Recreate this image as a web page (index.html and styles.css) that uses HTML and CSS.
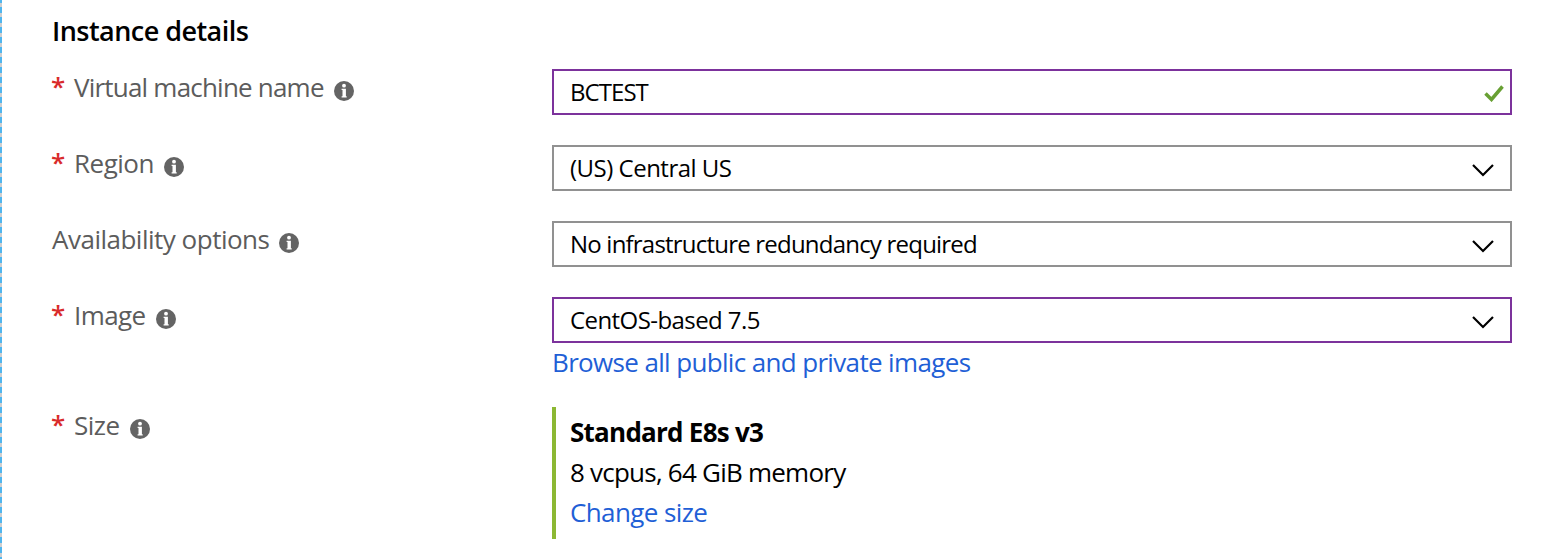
FILE: index.html
```html
<!DOCTYPE html>
<html lang="en">
<head>
<meta charset="utf-8">
<title>Instance details</title>
<link rel="stylesheet" href="styles.css">
</head>
<body>
<svg width="0" height="0" class="defs">
  <symbol id="info" viewBox="0 0 20 20"><circle cx="10" cy="10" r="10" fill="#646464"/><circle cx="10" cy="4.7" r="1.9" fill="#fff"/><path d="M7.6 7.8h4.3v7.4h.8v1.3H7.6v-1.3h.9V9.1h-.9z" fill="#fff"/></symbol>
  <symbol id="chevron" viewBox="0 0 24 14"><path d="M2 2l10 10L22 2" fill="none" stroke="#000" stroke-width="2.2"/></symbol>
</svg>
<main class="form">
  <h1 class="heading"><span class="t w-heading">Instance details</span></h1>
  <div class="row">
    <div class="label"><span class="star">*</span><span class="t w-name">Virtual machine name</span><svg class="info"><use href="#info"/></svg></div>
    <div class="box active"><span class="t w-bctest">BCTEST</span><svg class="check" viewBox="0 0 22 18"><path d="M2.5 9.5l6 6L19.5 2.5" fill="none" stroke="#68a033" stroke-width="3.5"/></svg></div>
  </div>
  <div class="row">
    <div class="label"><span class="star">*</span><span class="t w-region">Region</span><svg class="info"><use href="#info"/></svg></div>
    <div class="box"><span class="t w-us">(US) Central US</span><svg class="chevron"><use href="#chevron"/></svg></div>
  </div>
  <div class="row">
    <div class="label"><span class="t w-avail">Availability options</span><svg class="info"><use href="#info"/></svg></div>
    <div class="box"><span class="t w-infra">No infrastructure redundancy required</span><svg class="chevron"><use href="#chevron"/></svg></div>
  </div>
  <div class="row image-row">
    <div class="label"><span class="star">*</span><span class="t w-image">Image</span><svg class="info"><use href="#info"/></svg></div>
    <div class="field"><div class="box active"><span class="t w-cent">CentOS-based 7.5</span><svg class="chevron"><use href="#chevron"/></svg></div>
    <a class="link browse"><span class="t w-browse">Browse all public and private images</span></a></div>
  </div>
  <div class="row">
    <div class="label"><span class="star">*</span><span class="t w-size">Size</span><svg class="info"><use href="#info"/></svg></div>
    <div class="size"><b><span class="t w-std">Standard E8s v3</span></b><span><span class="t w-cpu">8 vcpus, 64 GiB memory</span></span><a class="link"><span class="t w-change">Change size</span></a></div>
  </div>
</main>
</body>
</html>
```
FILE: styles.css
```css
* { box-sizing: border-box; }
body { margin: 0; background: #fff; font: 24px/40px "Open Sans", "Noto Sans", sans-serif; color: #000; }
.defs { display: block; }
.form { height: 559px; padding: 11px 46px 0 52px; overflow: hidden; background: repeating-linear-gradient(#4fb5ee 0 3px, #cfcfcf 3px 7px, #4fb5ee 7px 10px) left top / 2px 100% no-repeat; }
.heading { margin: 0; height: 58px; font-size: 27px; font-weight: 600; line-height: 40px; }
.row { display: flex; height: 76px; }
.image-row { height: 110px; }
.label { display: flex; width: 500px; height: 40px; color: #5c5c5c; font-size: 26px; line-height: 36px; }
.star { width: 22px; margin-left: -1px; margin-right: 1px; color: #d92b2b; font-size: 26px; font-weight: 600; line-height: 34px; }
.info { width: 20px; height: 20px; margin: 12px 0 0 10px; }
.box { display: flex; align-items: center; justify-content: space-between; width: 960px; height: 46px; padding: 0 15px 0 16px; border: 2px solid #919191; }
.active { border-color: #7c329c; }
.t { white-space: nowrap; }
.w-heading { letter-spacing: -0.54px; }
.w-name { letter-spacing: -0.79px; }
.w-region { letter-spacing: -0.5px; }
.w-avail { letter-spacing: -0.5px; }
.w-image { letter-spacing: -0.6px; }
.w-size { letter-spacing: -0.5px; }
.w-bctest { letter-spacing: -0.95px; }
.w-us { letter-spacing: -0.5px; }
.w-infra { letter-spacing: -0.79px; }
.w-cent { letter-spacing: -0.57px; }
.w-browse { letter-spacing: -0.65px; }
.w-std { letter-spacing: -0.75px; }
.w-cpu { letter-spacing: -0.77px; }
.w-change { letter-spacing: -0.6px; }
.check { width: 22px; height: 18px; margin: 2px -10px 0 0; }
.chevron { width: 24px; height: 14px; margin-top: 3px; }
.link { color: #1f5fd6; }
.browse { display: block; font-size: 26px; line-height: 38px; }
.size { display: flex; flex-direction: column; height: 132px; padding: 5px 0 0 14px; border-left: 4px solid #8cb833; font-size: 26px; }
```
